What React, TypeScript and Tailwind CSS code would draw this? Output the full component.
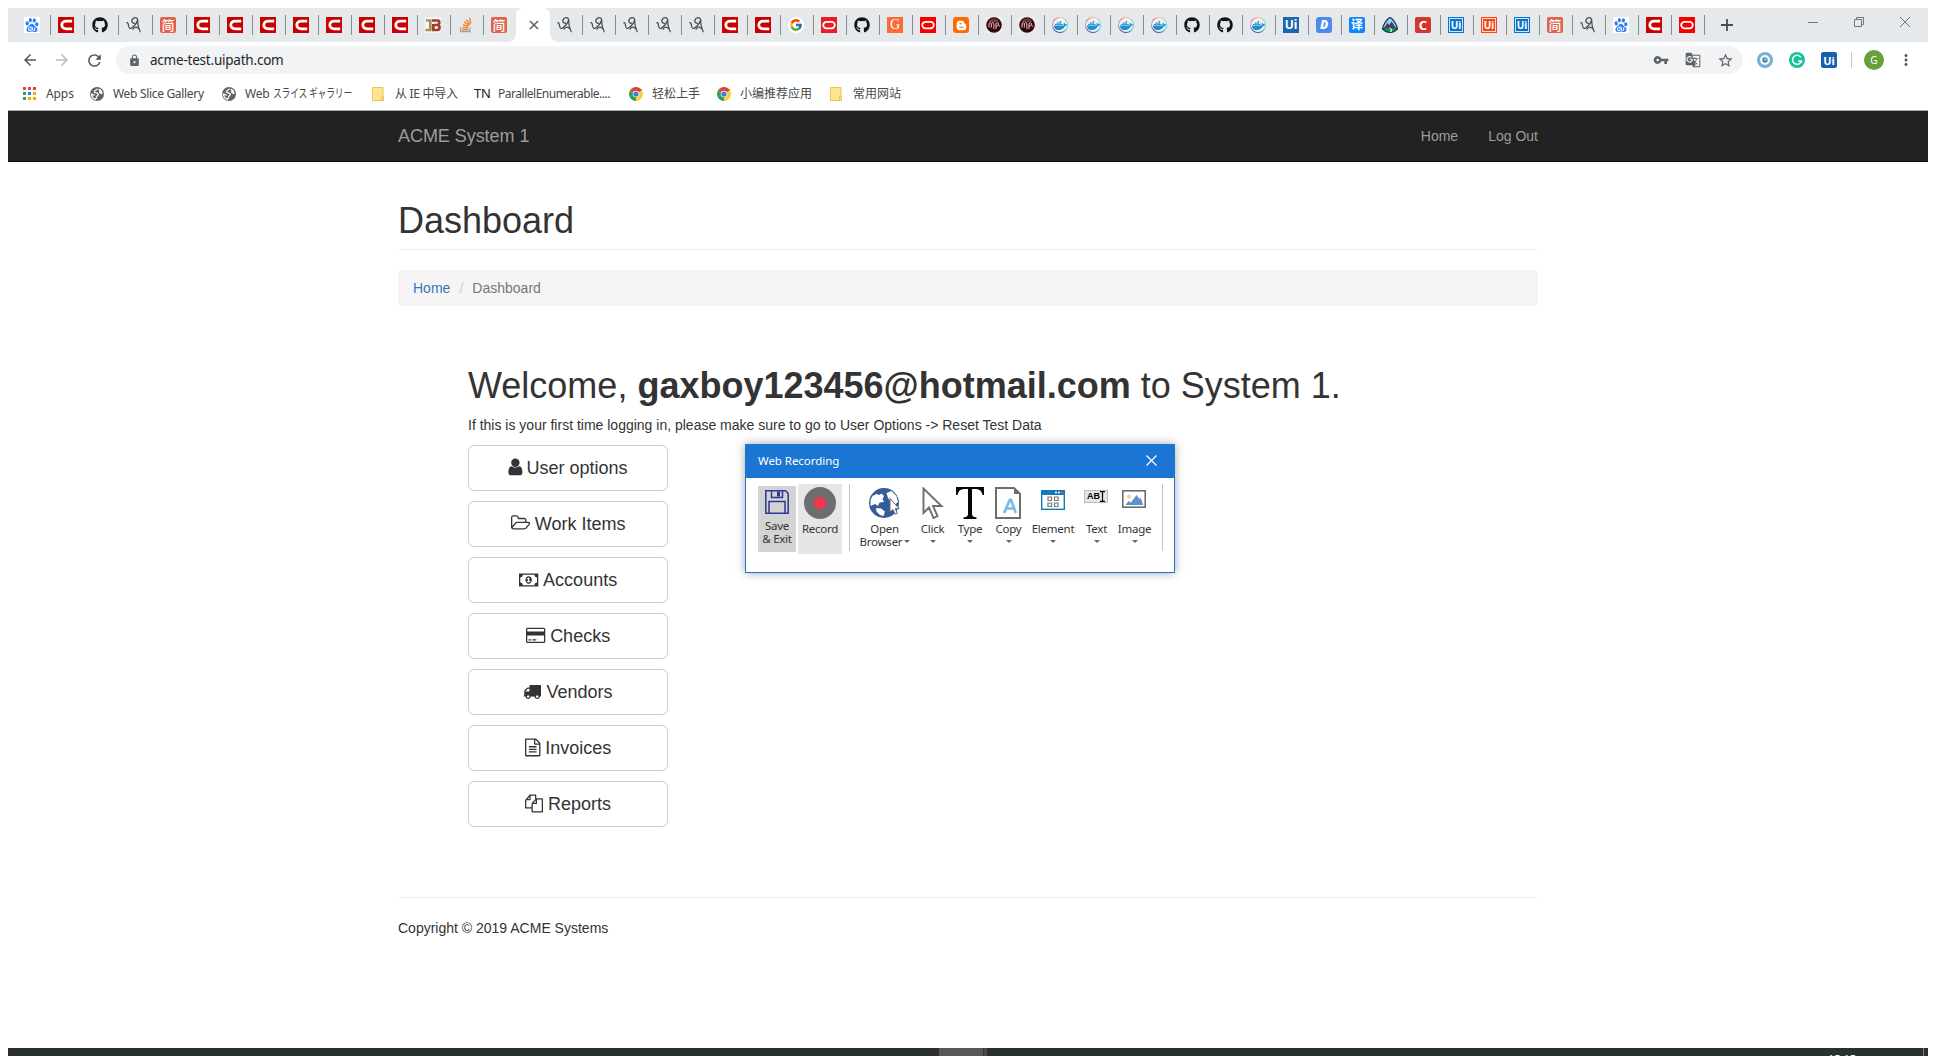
import React from 'react';
import { SiBaidu } from 'react-icons/si';
import { FaGithub, FaBloggerB, FaDocker } from 'react-icons/fa';
import { FcGoogle } from 'react-icons/fc';
import { MdLock, MdVpnKey, MdStarBorder, MdGTranslate, MdRefresh, MdArrowBack, MdArrowForward, MdMoreVert } from 'react-icons/md';

const UI = "font-['Noto_Sans','Noto_Sans_CJK_SC',sans-serif]";

/* ---------- favicons ---------- */

const Baidu = () => (
  <span className="flex size-4 items-center justify-center bg-white">
    <SiBaidu className="size-[14px] text-[#2b7cf6]" />
  </span>
);

const RedC = () => (
  <svg viewBox="0 0 16 16" className="size-4">
    <rect width="16" height="16" fill="#c80000" />
    <path d="M14.200 4.200H8.500C5.200 4.200 3.800 5.700 3.800 8s1.400 3.800 4.700 3.800h5.700" fill="none" stroke="#fff" strokeWidth="2.800" />
  </svg>
);

const Github = () => <FaGithub className="size-4 text-[#111418]" />;

const Script = () => (
  <svg viewBox="0 0 16 16" className="size-4" fill="none" stroke="#484848" strokeLinecap="round">
    <path d="M.8 5.800C2 5.300 2.300 7 2.600 9c.4 2.500 1.700 3 3 2C8 9.200 10.200 7.500 11 4.500" strokeWidth="1.200" />
    <path d="M8.500 6.200C6.200 6.500 5.600 4.500 6 3c.6-1.700 2-2.400 3.400-2.300C11.600 1 12 3 11.300 4.700" strokeWidth="1.300" />
    <path d="M11.500 2.500c0 4.500 1.100 8.800 2.700 12.300M7 12.300c1.200-2.600 3.800-3 5.500-.6" strokeWidth="1.200" />
  </svg>
);

const Glyph = ({ t, cls }: { t: string; cls: string }) => (
  <span className={'flex size-4 items-center justify-center overflow-hidden leading-none ' + UI + ' ' + cls}>{t}</span>
);

const Jian = () => <Glyph t="简" cls="rounded-[2px] bg-[#e2624c] text-[13px] font-medium text-white" />;
const Yi = () => <Glyph t="译" cls="rounded-[2px] bg-[#1186fa] text-[12px] font-bold text-white" />;
const LetterD = () => <Glyph t="D" cls="rounded-[3px] bg-[#4a8cec] text-[12px] font-black italic text-white" />;
const LetterC = () => <Glyph t="C" cls="rounded-[2px] bg-[#d5352a] text-[13px] font-bold text-white" />;
const LetterG = () => (
  <span className="flex size-4 items-center justify-center bg-[#fc6a35] font-['Liberation_Serif',serif] text-[14px] leading-none text-white">G</span>
);
const UiBlue = () => <Glyph t="Ui" cls="bg-[#1b67b2] text-[12px] font-bold text-white" />;
const UiBox = () => <Glyph t="Ui" cls="border border-[#0b74c9] bg-[#0b74c9] text-[10px] font-bold text-white ring-1 ring-inset ring-white/80" />;
const UiOrange = () => <Glyph t="Ui" cls="border border-[#fa4616] bg-[#fa4616] text-[10px] font-bold text-white ring-1 ring-inset ring-white/80" />;

const Jb = () => (
  <svg viewBox="0 0 16 16" className="size-4">
    <rect width="16" height="16" fill="#f7f5f2" />
    <path d="M1 3.500h4.300v9.500H.500" fill="none" stroke="#b08a58" strokeWidth="2.600" />
    <path d="M7 3.500h5.500q1.800 0 1.800 2T12.500 8H9M12.500 8q2 .2 2 2.500T12.500 13H8.300V7" fill="none" stroke="#99402f" strokeWidth="2.700" />
  </svg>
);
const Stack = () => (
  <svg viewBox="0 0 16 16" className="size-4" fill="none">
    <path d="M2.600 10.500v4h9.300v-4" stroke="#9aa0a5" strokeWidth="1.300" />
    <path d="M4.200 12.500h6M4.300 10.100l6 .7M4.900 7.600l5.700 1.800M6.200 4.900l5 3.400M8.300 2.700l3.700 4.900M11.500.7l1.300 6" stroke="#f0822a" strokeWidth="1.300" />
  </svg>
);
const Google = () => (
  <span className="flex size-4 items-center justify-center rounded-full bg-white">
    <FcGoogle className="size-[14px]" />
  </span>
);
const Oracle = ({ dim }: { dim?: boolean }) => (
  <svg viewBox="0 0 16 16" className="size-4">
    <rect width="16" height="16" fill={dim ? '#ea1b22' : '#f80000'} />
    <rect x="2.200" y="4.800" width="11.600" height="6.600" rx="3.300" fill="none" stroke="#fff" strokeWidth="1.800" />
  </svg>
);
const Blogger = () => (
  <span className="flex size-4 items-center justify-center rounded-[3px] bg-[#ff6a00]">
    <FaBloggerB className="size-[11px] text-white" />
  </span>
);
const Mp = () => (
  <svg viewBox="0 0 16 16" className="size-4">
    <rect width="16" height="16" fill="#f4f1f1" />
    <circle cx="8" cy="8" r="7.800" fill="#33080c" />
    <path d="M2.500 4.500a6.500 6.500 0 0 1 11 0q-5.500 2-11 0z" fill="#6c3a3d" />
    <path d="M3 10.500V6.500q1.300-2 2.300 0v4M5.600 6.500q1.300-2 2.300 0v5.500M10 12V6.500q1.500-1.500 2.500 0t-2.500 3M12.500 9h1.500" fill="none" stroke="#e7c4c4" strokeWidth="1" />
  </svg>
);
const Docker = () => (
  <span className="flex size-4 items-center justify-center rounded-full bg-[conic-gradient(#f7c58a,#5fd9e6_25%,#35cbe4_35%,#3b5878_50%,#7259a8_65%,#c9a5dd_78%,#f06e62_88%,#f7c58a)]">
    <span className="flex size-[14px] items-center justify-center rounded-full bg-[#eef2f4]">
      <FaDocker className="size-[13px] text-[#1c90cf]" />
    </span>
  </span>
);
const Mountain = () => (
  <svg viewBox="0 0 16 16" className="size-4">
    <path d="M8 .6C10.500 1 15 8 15.500 12Q12 15.500 8 15.500T.500 12C1 8 5.500 1 8 .600z" fill="#8fd2f2" stroke="#14365f" strokeWidth="1.200" strokeLinejoin="round" />
    <path d="M2 11l3.500-5 2 2L9.500 4.500 14 11z" fill="#513768" />
    <path d="M.700 11.600Q8 9 15.300 11.600 12 15.300 8 15.300T.700 11.600z" fill="#1b9a48" stroke="#14365f" strokeWidth=".8" />
    <path d="M7 10.500l2 2-1 2.500h1.500l.500-2.500-2-2z" fill="#fff" />
  </svg>
);

type Tab = React.FC<any>;
const wideTabs: Tab[] = [Baidu, RedC, Github, Script, Jian];
const leftTabs: Tab[] = [RedC, RedC, RedC, RedC, RedC, RedC, RedC, Jb, Stack];
const rightTabs: Tab[] = [
  Script, Script, Script, Script, Script, RedC, RedC, Google, () => <Oracle dim />, Github, LetterG, Oracle, Blogger,
  Mp, Mp, Docker, Docker, Docker, Docker, Github, Github, Docker, UiBlue, LetterD, Yi, Mountain, LetterC,
  UiBox, UiOrange, UiBox, Jian, Script, Baidu, RedC, Oracle,
];

const TabCell = ({ icon: Icon, wide }: { icon: Tab; wide?: boolean }) => (
  <div className={'flex h-[34px] shrink-0 items-center justify-between pl-[7px] ' + (wide ? 'w-[34px]' : 'w-[33px]')}>
    <Icon />
    <span className="h-5 w-px bg-[#888c91]" />
  </div>
);

const TabStrip = () => (
  <div className="flex h-[34px] bg-[#e6e9ec] pl-[9px]">
    {wideTabs.map((t, i) => <TabCell key={i} icon={t} wide />)}
    {leftTabs.map((t, i) => <TabCell key={i} icon={t} />)}
    <div className="flex w-8 shrink-0 items-center pl-[7px]"><Jian /></div>
    <div className="relative flex w-[34px] shrink-0 items-center justify-center rounded-t-[7px] bg-white pl-[2px]">
      <span className="absolute bottom-0 -left-2 size-2 bg-[radial-gradient(circle_at_0_0,transparent_7.500px,white_8px)]" />
      <span className="absolute -right-2 bottom-0 size-2 bg-[radial-gradient(circle_at_100%_0,transparent_7.500px,white_8px)]" />
      <svg viewBox="0 0 10 10" className="size-[10px]" stroke="#5f6368" strokeWidth="1.600"><path d="M1 1l8 8M9 1l-8 8" /></svg>
    </div>
    {rightTabs.map((t, i) => <TabCell key={i} icon={t} />)}
    <svg viewBox="0 0 12 12" className="mt-[11px] ml-[16px] size-3" stroke="#4a4d51" strokeWidth="1.800"><path d="M6 0v12M0 6h12" /></svg>
    <div className="ml-auto flex gap-9 pt-[9px] pr-[18px] text-[#72767a]">
      <svg viewBox="0 0 10 10" className="size-[10px]" stroke="currentColor"><path d="M0 5.500h10" /></svg>
      <svg viewBox="0 0 10 10" className="size-[10px]" fill="none" stroke="currentColor"><path d="M.5 2.500h7v7h-7zM2.500 2.500v-2h7v7h-2" /></svg>
      <svg viewBox="0 0 10 10" className="size-[10px]" stroke="currentColor"><path d="M0 0l10 10M10 0L0 10" /></svg>
    </div>
  </div>
);

const Toolbar = () => (
  <div className="flex h-9 items-center pl-[13px]">
    <MdArrowBack className="mr-[14px] size-[18px] text-[#54585d]" />
    <MdArrowForward className="mr-[14px] size-[18px] text-[#b9bbbe]" />
    <MdRefresh className="-mr-px size-[19px] text-[#54585d]" />
    <div className="ml-[13px] flex h-7 w-[1627px] items-center rounded-full bg-[#f1f3f4] pl-3">
      <MdLock className="mr-[9px] size-[13px] text-[#5f6368]" />
      <span className={'grow text-[13.500px] tracking-[-0.220px] whitespace-nowrap text-[#24272b] ' + UI}>acme-test.uipath.com</span>
      <div className="flex items-center gap-4 pr-[9px] text-[#5f6368]">
        <MdVpnKey className="size-4" />
        <MdGTranslate className="size-4" />
        <MdStarBorder className="size-[17px]" />
      </div>
    </div>
    <div className="ml-[14px] flex items-center gap-4">
      <svg viewBox="0 0 16 16" className="size-4"><circle cx="8" cy="8" r="6.500" fill="#f5fafc" stroke="#74b1d4" strokeWidth="3" /><circle cx="8" cy="8" r="2.700" fill="#3f8f8d" /><circle cx="8.500" cy="7.500" r="1" fill="#d7eceb" /></svg>
      <svg viewBox="0 0 16 16" className="size-4"><circle cx="8" cy="8" r="8" fill="#15c39a" /><path d="M11.800 5.300A4.500 4.500 0 1 0 12.400 9H9.300M12.400 9v2" fill="none" stroke="#fff" strokeWidth="1.500" /></svg>
      <Glyph t="Ui" cls="rounded-[2px] bg-[#1b5fae] text-[11px] font-bold text-white" />
    </div>
    <span className="ml-[14px] h-4 w-px bg-[#c6c8ca]" />
    <span className={'ml-[12px] flex size-5 items-center justify-center rounded-full bg-[#689f38] text-[10px] text-white ' + UI}>G</span>
    <MdMoreVert className="ml-[13px] size-[18px] text-[#54585d]" />
  </div>
);

/* ---------- bookmarks ---------- */

const AppsGrid = () => (
  <svg viewBox="0 0 13 13" className="size-[13px]">
    {['#ea4335', '#ea4335', '#ea4335', '#34a162', '#1a85f0', '#f5a70f', '#34a162', '#f5a70f', '#f5a70f'].map((c, i) => (
      <rect key={i} x={(i % 3) * 5} y={Math.floor(i / 3) * 5} width="3" height="3" fill={c} />
    ))}
  </svg>
);
const Globe = () => (
  <svg viewBox="0 0 14 14" className="size-[14px]">
    <circle cx="7" cy="7" r="7" fill="#5f6368" />
    <path d="M7.500 1.700C6.800 3.200 4.800 3 4.300 4.800c0 1.400 3.200.6 4 2 .5 1.300-1.300 1.700-1.600 3-.1 1-.6 1.800-1.200 2.500A5.600 5.600 0 0 1 1.500 7.200c1.500.5 2.700.3 3 1.500" fill="none" stroke="#fff" strokeWidth="1.300" />
    <path d="M8.500 1.600a5.600 5.600 0 0 1 4 5.500c-1.300.6-2.200-.8-3.200-1.400-.8-.7.7-1.600-.3-2.200z" fill="#fff" />
  </svg>
);
const Folder = () => (
  <svg viewBox="0 0 12 14" className="h-[14px] w-3">
    <path d="M.5.5h10.500v9.500h.5v3.500H.500z" fill="#ffe58f" stroke="#eac54f" />
    <path d="M9.500 13.500V9.500h2" fill="none" stroke="#eac54f" />
  </svg>
);
const Chrome = () => (
  <svg viewBox="0 0 14 14" className="size-[14px]">
    <path d="M7 7L.940 3.500A7 7 0 0 1 13.060 3.500z" fill="#dc4437" />
    <path d="M7 7L13.060 3.500A7 7 0 0 1 7 14z" fill="#fccd3e" />
    <path d="M7 7V14A7 7 0 0 1 .940 3.500z" fill="#2f9e56" />
    <path d="M7 3.500h6.060L12 2.500H7z" fill="#dc4437" />
    <circle cx="7" cy="7" r="3.300" fill="#f3f3f3" />
    <circle cx="7" cy="7" r="2.600" fill="#3f7fd0" />
  </svg>
);

const bookmarks: { icon: React.ReactNode; label: React.ReactNode; width: string; text: string }[] = [
  { icon: <AppsGrid />, label: 'Apps', width: 'w-[67px]', text: 'tracking-[-0.100px]' },
  { icon: <Globe />, label: 'Web Slice Gallery', width: 'w-[132px]', text: 'tracking-[-0.320px]' },
  {
    icon: <Globe />,
    label: (
      <>
        <span className="mr-1">Web</span>
        <span className="inline-block w-20 origin-left scale-x-[0.730] font-['Noto_Sans_CJK_JP',sans-serif]">スライス ギャラリー</span>
      </>
    ),
    width: 'w-[150px]',
    text: 'tracking-[-0.200px]',
  },
  { icon: <Folder />, label: '从 IE 中导入', width: 'w-[102px]', text: 'tracking-[-0.300px]' },
  { icon: <span className="text-[13px] tracking-[-0.300px] text-[#222]">TN</span>, label: 'ParallelEnumerable....', width: 'w-[155px]', text: 'pl-px tracking-[-0.480px]' },
  { icon: <Chrome />, label: '轻松上手', width: 'w-[88px]', text: '' },
  { icon: <Chrome />, label: '小编推荐应用', width: 'w-[113px]', text: '' },
  { icon: <Folder />, label: '常用网站', width: 'w-[90px]', text: '' },
];

const Bookmarks = () => (
  <div className={'flex h-[33px] shrink-0 items-center border-b border-[#a9a9a9] pl-[15px] text-[12px] text-[#45484c] ' + UI}>
    {bookmarks.map((b, i) => (
      <div key={i} className={'flex h-full shrink-0 items-center pb-px whitespace-nowrap ' + b.width}>
        <span className="flex w-[23px] shrink-0">{b.icon}</span>
        <span className={b.text}>{b.label}</span>
      </div>
    ))}
  </div>
);

/* ---------- dashboard ---------- */

const FaSvg = ({ w, children }: { w: number; children: React.ReactNode }) => (
  <svg viewBox={`0 0 ${w} 1792`} className="h-[18px] shrink-0 overflow-visible" style={{ width: (w * 18) / 1792 }} fill="currentColor" fillRule="evenodd">{children}</svg>
);

const menu: { label: string; icon: React.ReactNode }[] = [
  {
    label: 'User options',
    icon: <FaSvg w={1280}><path transform="translate(-340 -190) scale(1.090)" d="M1536 1399q0 109-62.500 187t-150.500 78h-854q-88 0-150.500-78t-62.500-187q0-85 8.500-160.500t31.500-152 58.500-131 94-89 134.500-34.500q131 128 313 128t313-128q76 0 134.500 34.500t94 89 58.500 131 31.500 152 8.500 160.500zm-256-887q0 159-112.500 271.500t-271.500 112.500-271.500-112.500-112.500-271.500 112.500-271.500 271.500-112.500 271.500 112.500 112.500 271.500z" /></FaSvg>,
  },
  {
    label: 'Work Items',
    icon: <FaSvg w={1920}><path transform="translate(-64 -100)" d="M1845 931q0-35-53-35h-1088q-40 0-85.500 21.500t-71.500 52.500l-294 363q-18 24-18 40 0 35 53 35h1088q40 0 86-22t71-53l294-363q18-22 18-39zm-1141-163h768v-160q0-40-28-68t-68-28h-576q-40 0-68-28t-28-68v-64q0-40-28-68t-68-28h-320q-40 0-68 28t-28 68v853l256-315q44-53 116-87.500t140-34.500zm1269 163q0 62-46 120l-295 363q-43 53-116 87.500t-140 34.500h-1088q-92 0-158-66t-66-158v-960q0-92 66-158t158-66h320q92 0 158 66t66 158v32h544q92 0 158 66t66 158v160h192q54 0 99 24.500t67 70.500q15 32 15 68z" /></FaSvg>,
  },
  {
    label: 'Accounts',
    icon: <FaSvg w={1920}><path d="M0 256H1920V1536H0zM384 384Q384 490 309 565T128 640V1152Q234 1152 309 1227T384 1408H1536Q1536 1302 1611 1227T1792 1152V640Q1686 640 1611 565T1536 384zM960 512Q1130 512 1205 640T1280 896 1205 1152 960 1280 715 1152 640 896 715 640 960 512zM768 1024V1120H1152V1024H1024V640H912L764 776 841 856 896 808V1024z" /></FaSvg>,
  },
  {
    label: 'Checks',
    icon: <FaSvg w={1920}><path transform="translate(0 -60)" d="M160 128H1760Q1920 128 1920 288V1504Q1920 1664 1760 1664H160Q0 1664 0 1504V288Q0 128 160 128zM160 256Q128 256 128 288V512H1792V288Q1792 256 1760 256zM128 896V1504Q128 1536 160 1536H1760Q1792 1536 1792 1504V896zM256 1280H512V1408H256zM640 1280H1024V1408H640z" /></FaSvg>,
  },
  {
    label: 'Vendors',
    icon: <FaSvg w={1792}><path transform="translate(0 -60)" d="M640 1408q0-52-38-90t-90-38-90 38-38 90 38 90 90 38 90-38 38-90zm-384-512h384v-256h-158q-13 0-22 9l-195 195q-9 9-9 22v30zm1280 512q0-52-38-90t-90-38-90 38-38 90 38 90 90 38 90-38 38-90zm256-1088v1024q0 15-4 26.500t-13.500 18.500-16.500 11.500-23.500 6-22.500 2-25.500 0-22.500-.5q0 106-75 181t-181 75-181-75-75-181h-384q0 106-75 181t-181 75-181-75-75-181h-64q-3 0-22.500.5t-25.500 0-22.500-2-23.500-6-16.500-11.500-13.500-18.500-4-26.500q0-26 19-45t45-19v-320q0-8-.5-35t0-38 2.500-34.500 6.500-37 14-30.500 22.500-30l198-198q19-19 50.500-32t58.500-13h160v-192q0-26 19-45t45-19h1024q26 0 45 19t19 45z" /></FaSvg>,
  },
  {
    label: 'Invoices',
    icon: <FaSvg w={1536}><path transform="translate(-128 -60)" d="M1596 380q28 28 48 76t20 88v1152q0 40-28 68t-68 28h-1344q-40 0-68-28t-28-68v-1600q0-40 28-68t68-28h896q40 0 88 20t76 48zm-444-244v376h376q-10-29-22-41l-313-313q-12-12-41-22zm384 1528v-1024h-416q-40 0-68-28t-28-68v-416h-768v1536h1280zm-1024-864q0-14 9-23t23-9h704q14 0 23 9t9 23v64q0 14-9 23t-23 9h-704q-14 0-23-9t-9-23v-64zm736 224q14 0 23 9t9 23v64q0 14-9 23t-23 9h-704q-14 0-23-9t-9-23v-64q0-14 9-23t23-9h704zm0 256q14 0 23 9t9 23v64q0 14-9 23t-23 9h-704q-14 0-23-9t-9-23v-64q0-14 9-23t23-9h704z" /></FaSvg>,
  },
  {
    label: 'Reports',
    icon: (
      <FaSvg w={1792}>
        <path transform="translate(0 -60)" d="M710 1350H64V600L500 64H1060V470M500 64V520H80M710 1728V900L1130 448H1728V1728zM1130 448V900H720" fill="none" stroke="currentColor" strokeWidth="125" strokeLinejoin="round" />
      </FaSvg>
    ),
  },
];

const Dashboard = () => (
  <main className="mx-auto w-[1140px] pt-[38px] font-['Liberation_Sans',Arial,sans-serif] text-[14px] leading-5 text-[#333]">
    <div className="h-[50px] border-b border-[#eee]">
      <h1 className="text-[36px] leading-[42px]">Dashboard</h1>
    </div>
    <div className="mt-5 flex h-9 items-center rounded bg-[#f5f5f5] px-[15px]">
      <span className="text-[#337ab7]">Home</span>
      <span className="w-[22px] text-center text-[#ccc]">/</span>
      <span className="text-[#777]">Dashboard</span>
    </div>
    <div className="mt-[59px] pl-[70px]">
      <h1 className="text-[36px] leading-[42px] whitespace-nowrap">
        Welcome, <b>gaxboy123456@hotmail.com</b> to System 1.
      </h1>
      <p className="mt-2">If this is your first time logging in, please make sure to go to User Options -&gt; Reset Test Data</p>
      <div className="mt-[10px] flex w-[200px] flex-col gap-[10px]">
        {menu.map((m) => (
          <div key={m.label} className="flex h-[46px] items-center justify-center gap-[5px] rounded-[6px] border border-[#ccc] bg-white text-[18px] leading-6">
            {m.icon}
            <span>{m.label}</span>
          </div>
        ))}
      </div>
    </div>
    <div className="mt-[70px] border-t border-[#eee] pt-5">Copyright © 2019 ACME Systems</div>
  </main>
);

/* ---------- recorder window ---------- */

const Caret = () => <span className="h-0 w-0 border-x-[3px] border-t-[3px] border-x-transparent border-t-[#666]" />;

const Tool = ({ label, width, children }: { label: string; width: string; children: React.ReactNode }) => (
  <div className={'flex shrink-0 flex-col items-center ' + width}>
    <div className="flex h-[35px] items-start justify-center">{children}</div>
    <span className="leading-[13px]">{label}</span>
    <span className="mt-[5px] flex"><Caret /></span>
  </div>
);

const Recorder = () => (
  <div className={'absolute top-[444px] left-[745px] h-[129px] w-[430px] border border-[#1b75d3] bg-white text-[11.500px] tracking-[-0.250px] text-[#333] shadow-[0_0_9px_rgba(0,0,0,0.35)] ' + UI}>
    <div className="flex h-[33px] items-center justify-between bg-[#1b75d3] pr-[17px] pb-[2px] pl-3 text-white">
      <span className="tracking-[-0.050px]">Web Recording</span>
      <svg viewBox="0 0 11 11" className="size-[11px]" stroke="#fff" strokeWidth="1.200"><path d="M.5.5l10 10M10.500.5l-10 10" /></svg>
    </div>
    <div className="flex h-[94px] pt-[6px] pl-3">
      <div className="mt-[2px] flex h-[66px] w-[38px] flex-col items-center bg-[#d3d3d3] pt-1 text-center leading-[13px]">
        <svg viewBox="0 0 24 24" className="mb-[5px] size-6 shrink-0" fill="none" stroke="#2b3990" strokeWidth="1.500">
          <path d="M.8.8h19.700l2.700 2.700v19.700H.800z" />
          <path d="M4 23V11.500h16V23M6.500.8v6.700h11V.8" />
          <path d="M13.500 1.500v5" strokeWidth="3" />
        </svg>
        <span>Save</span>
        <span>&amp; Exit</span>
      </div>
      <div className="ml-[2px] flex h-[70px] w-11 flex-col items-center bg-[#e6e6e6] pt-[3px]">
        <svg viewBox="0 0 32 32" className="mb-[3px] size-8 shrink-0"><circle cx="16" cy="16" r="16" fill="#6d6e70" /><circle cx="16" cy="16" r="6.200" fill="#f1364d" /></svg>
        <span className="leading-[13px]">Record</span>
      </div>
      <span className="ml-[7px] h-[67px] w-px bg-[#c4c4c4]" />
      <div className="ml-2 flex pt-[3px]">
        <div className="flex w-[53px] flex-col items-center leading-[13px]">
          <div className="h-[35px] pt-px">
            <svg viewBox="0 0 32 30" className="h-[30px] w-8">
              <circle cx="15" cy="15" r="15" fill="#345c9c" />
              <path d="M1.500 12l2-4 4-2 3 1 2-1.500 2.500 2.500-1.500 3 1.500 3-4.500.5-1.500 3.500-3-2-4.500 2zM7 20l5 .5 4 3-1.500 4.500-3.500-1-3.500-3.500zM17.500 5l5-2 5 5 1.500 6-3 2.500-4-2.500-3-4z" fill="#fff" />
              <path d="M21 10.500v13.500l3-2.500 2.200 4.800 2.200-1-2.200-4.600h4z" fill="#fff" stroke="#666" />
            </svg>
          </div>
          <span>Open</span>
          <span className="flex items-center gap-[2px] pl-px">Browser<Caret /></span>
        </div>
        <Tool label="Click" width="w-[43px]">
          <svg viewBox="0 0 22 32" className="h-8 w-[22px]" fill="#fff" stroke="#6d6e70" strokeWidth="1.900"><path d="M1.500 1.500v24.500l5.500-5.500 4.500 10.500 4-2-4.500-10h8.500z" /></svg>
        </Tool>
        <Tool label="Type" width="w-8">
          <svg viewBox="0 0 28 32" className="h-8 w-7" fill="#050505"><path d="M0 0h28v8h-1.500Q25.500 2 20 2H16v25q0 3 4.500 3.500V32h-13v-1.500Q12 30 12 27V2H8Q2.500 2 1.500 8H0z" /></svg>
        </Tool>
        <Tool label="Copy" width="w-[45px]">
          <svg viewBox="0 0 26 32" className="-ml-px h-8 w-[26px]">
            <path d="M1 1h18l6 6v24H1z" fill="#fff" stroke="#6d6e70" strokeWidth="2" />
            <path d="M19 1v6h6z" fill="#6d6e70" />
            <path d="M9 26L14.800 12.800h1.200L20.800 26M11 21.500h8.500" fill="none" stroke="#77bde6" strokeWidth="2.700" />
          </svg>
        </Tool>
        <Tool label="Element" width="w-11">
          <svg viewBox="0 0 24 20" className="mt-[3px] h-5 w-6">
            <rect x=".7" y=".7" width="22.600" height="18.600" fill="#fff" stroke="#0f7cb8" strokeWidth="1.400" />
            <path d="M0 0h24v5H0z" fill="#0f7cb8" />
            <path d="M14 2.500h2M17 2.500h2" stroke="#fff" strokeWidth="1.500" /><path d="M20 2.500h2" stroke="#ef4b5b" strokeWidth="1.500" />
            <path d="M7 7h3.500v3.500H7zM13.500 7H17v3.500h-3.500zM7 13h3.500v3.500H7zM13.500 13H17v3.500h-3.500z" fill="none" stroke="#77787a" strokeWidth="1.200" />
          </svg>
        </Tool>
        <Tool label="Text" width="w-[43px]">
          <span className="mt-[3px] -ml-px flex h-[13px] w-6 items-center justify-center border border-[#bcbcbc] bg-[#e4e4e4] font-['Liberation_Sans',sans-serif] text-[9px] font-bold tracking-normal text-black">
            AB
            <svg viewBox="0 0 5 11" className="h-[11px] w-[5px]" stroke="#000" strokeWidth="1.200"><path d="M0 .6h5M0 10.400h5M2.500 0v11" /></svg>
          </span>
        </Tool>
        <Tool label="Image" width="w-[33px]">
          <svg viewBox="0 0 24 18" className="mt-[3px] -ml-px h-[18px] w-6">
            <rect x=".8" y=".8" width="22.400" height="16.400" fill="#fff" stroke="#6d6e70" strokeWidth="1.600" />
            <circle cx="7" cy="6.500" r="2" fill="#f9d67a" />
            <path d="M3.500 15l3-4 2.500 1.500L14.500 5l3 4 1.500-1 2 7z" fill="#6091cf" />
          </svg>
        </Tool>
      </div>
      <span className="ml-[11px] h-[67px] w-px bg-[#c4c4c4]" />
    </div>
  </div>
);

export default function App() {
  return (
    <div className="relative h-[1056px] w-[1936px] overflow-hidden bg-white px-2 pt-2">
      <div className="flex h-[1048px] flex-col">
        <TabStrip />
        <Toolbar />
        <Bookmarks />
        <nav className="h-[51px] shrink-0 border-b border-[#080808] bg-[#222] font-['Liberation_Sans',Arial,sans-serif] text-[14px] text-[#9d9d9d]">
          <div className="mx-auto flex h-full w-[1140px] items-center">
            <span className="text-[18px] tracking-[-0.050px]">ACME System 1</span>
            <span className="ml-auto">Home</span>
            <span className="ml-[30px]">Log Out</span>
          </div>
        </nav>
        <div className="grow"><Dashboard /></div>
        <footer className="flex h-2 shrink-0 overflow-hidden bg-[#2a302b]">
          <span className="ml-[931px] h-2 w-11 bg-[#565756]" />
          <span className="h-2 w-1 border-l border-[#333] bg-[#484a49]" />
          <span className={'ml-[841px] pt-[5px] text-[11px] leading-3 text-white ' + UI}>15:15</span>
          <span className="mr-1 ml-auto h-2 w-px bg-[#7b807c]" />
        </footer>
      </div>
      <Recorder />
    </div>
  );
}
